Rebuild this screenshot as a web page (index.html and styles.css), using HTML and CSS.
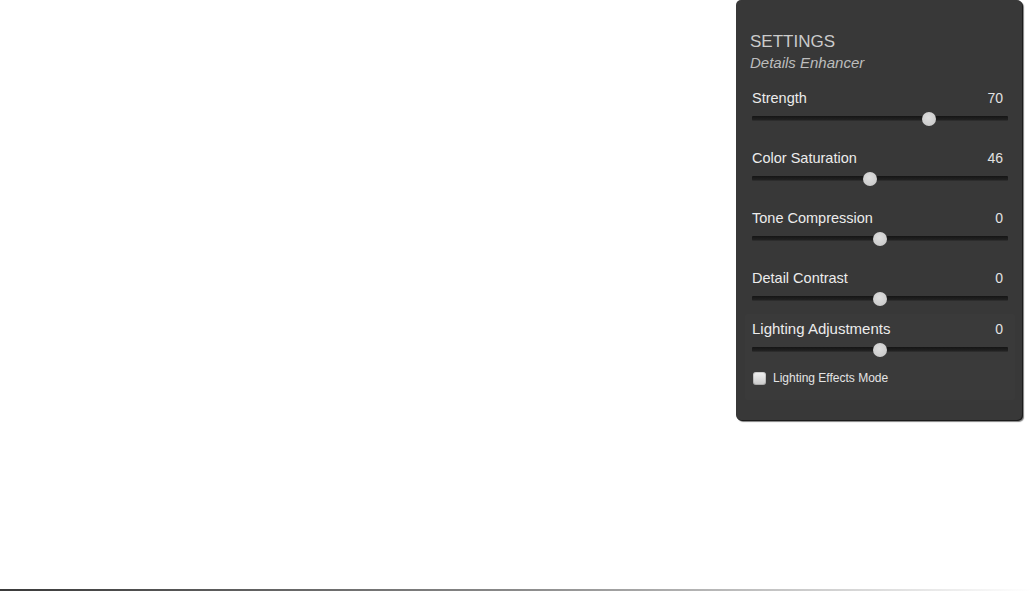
FILE: index.html
```html
<!DOCTYPE html>
<html lang="en">
<head>
  <meta charset="UTF-8" />
  <meta name="viewport" content="width=device-width, initial-scale=1.0" />
  <title>Settings - Details Enhancer</title>
  <link rel="stylesheet" href="styles.css">
</head>
<body>
  <main class="stage">
    <aside class="panel">
      <div class="panel-head">
        <h1>SETTINGS</h1>
        <h2>Details Enhancer</h2>
      </div>

      <div class="control">
        <div class="control-label"><span>Strength</span><span class="value">70</span></div>
        <div class="slider"><div class="track"></div><div class="thumb" style="left: 69%"></div></div>
      </div>
      <div class="control">
        <div class="control-label"><span>Color Saturation</span><span class="value">46</span></div>
        <div class="slider"><div class="track"></div><div class="thumb" style="left: 46%"></div></div>
      </div>
      <div class="control">
        <div class="control-label"><span>Tone Compression</span><span class="value">0</span></div>
        <div class="slider"><div class="track"></div><div class="thumb" style="left: 50%"></div></div>
      </div>
      <div class="control">
        <div class="control-label"><span>Detail Contrast</span><span class="value">0</span></div>
        <div class="slider"><div class="track"></div><div class="thumb" style="left: 50%"></div></div>
      </div>

      <div class="lighting">
        <div class="control">
          <div class="control-label big"><span>Lighting Adjustments</span><span class="value">0</span></div>
          <div class="slider"><div class="track"></div><div class="thumb" style="left: 50%"></div></div>
        </div>
        <label class="check">
          <span class="box"></span>
          <span>Lighting Effects Mode</span>
        </label>
      </div>
    </aside>
  </main>
  <div class="baseline"></div>
</body>
</html>
```

FILE: styles.css
```css
html, body {
  height: 100%;
}
body {
  margin: 0;
  background: #fff;
  font-family: 'Liberation Sans', Arial, sans-serif;
  display: flex;
  flex-direction: column;
}
.stage {
  display: flex;
  justify-content: flex-end;
  padding-right: 10px;
}
.panel {
  width: 286px;
  box-sizing: border-box;
  background: #383838;
  border-radius: 5px;
  box-shadow: 1px 1px 0 #1c1c1c, 2px 2px 1px rgba(0,0,0,0.5);
  padding: 32px 14px 20px 16px;
  color: #e6e6e6;
}
.panel-head {
  margin-left: -2px;
  margin-bottom: 17px;
}
.panel-head h1 {
  margin: 0;
  font-size: 17px;
  line-height: 20px;
  font-weight: normal;
  color: #cbcbcb;
}
.panel-head h2 {
  margin: 2px 0 0;
  font-size: 15px;
  line-height: 18px;
  font-weight: normal;
  font-style: italic;
  color: #bdbdbd;
}
.control {
  margin-bottom: 18px;
}
.control-label {
  display: flex;
  justify-content: space-between;
  font-size: 14.5px;
  line-height: 18px;
  color: #ececec;
}
.control-label.big {
  font-size: 15px;
}
.control-label .value {
  padding-right: 5px;
  font-size: 14px;
  color: #e2e2e2;
}
.slider {
  position: relative;
  height: 24px;
}
.track {
  position: absolute;
  left: 0; right: 0;
  top: 9px;
  height: 4px;
  background: linear-gradient(#151515, #222);
  border-bottom: 1px solid #2c2c2c;
  border-radius: 1px;
}
.thumb {
  position: absolute;
  top: 5px;
  width: 14px;
  height: 14px;
  margin-left: -7px;
  border-radius: 50%;
  background: radial-gradient(circle at 45% 40%, #dedede, #c4c4c4);
}
.lighting {
  margin: -15px -7px 0 -7px;
  padding: 6px 7px 14px;
  background: #3a3a3a;
  border-radius: 2px;
}
.lighting .control {
  margin-bottom: 0;
}
.check {
  display: flex;
  align-items: center;
  gap: 7px;
  margin-top: 8px;
  padding-left: 1px;
  font-size: 12px;
  line-height: 16px;
  color: #e4e4e4;
}
.check .box {
  width: 13px;
  height: 13px;
  border-radius: 3px;
  background: linear-gradient(#f2f2f2, #c9c9c9);
  box-shadow: inset 0 0 0 1px rgba(0,0,0,0.15);
}
.baseline {
  margin-top: auto;
  height: 2px;
  background: linear-gradient(to right, #3a3a3a, #8a8a8a 50%, #fff);
}
```
